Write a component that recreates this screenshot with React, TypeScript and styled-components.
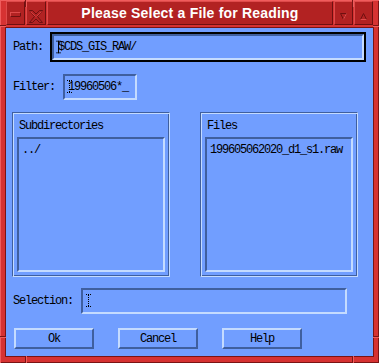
import React from "react";
import styled, { createGlobalStyle, css } from "styled-components";

const C = {
  blue: "#719eff",
  dark: "#3f5f9f",
  light: "#c4dbff",
  red: "#d63232",
  redLight: "#f05c5c",
  redDark: "#7a1414",
  title: "#b22222",
  titleLight: "#de4a4a",
  titleDark: "#6e1010",
};

const Global = createGlobalStyle`
  html, body { margin: 0; padding: 0; background: ${C.blue}; }
  body { width: 379px; height: 363px; overflow: hidden; }
`;

const mono = css`
  font-family: "Liberation Mono", "DejaVu Sans Mono", monospace;
  font-size: 12px;
  letter-spacing: -1.2px;
  color: #000;
`;

const sunken = css`
  border: 2px solid;
  border-color: ${C.dark} ${C.light} ${C.light} ${C.dark};
`;

const raised = css`
  border: 2px solid;
  border-color: ${C.light} ${C.dark} ${C.dark} ${C.light};
`;

const Window = styled.div`
  position: relative;
  box-sizing: border-box;
  width: 379px;
  height: 363px;
  padding: 1px 6px 7px 6px;
  background: ${C.red};
  box-shadow: inset 1px 1px 0 ${C.redLight}, inset -1px -1px 0 ${C.redDark};
  display: flex;
  flex-direction: column;
`;

const Notch = styled.span<{ $v?: boolean }>`
  position: absolute;
  ${(p) =>
    p.$v
      ? css`width: 6px; height: 2px; border-top: 1px solid ${C.redDark}; background: ${C.redLight};`
      : css`width: 2px; height: 7px; border-left: 1px solid ${C.redDark}; background: ${C.redLight};`}
  box-sizing: border-box;
`;

const TitleBar = styled.div`
  display: flex;
  gap: 1px;
  height: 24px;
  margin-bottom: 3px;
`;

const TitleSeg = styled.div<{ $w?: number }>`
  box-sizing: border-box;
  ${(p) => (p.$w ? `width: ${p.$w}px; flex: none;` : "flex: 1;")}
  height: 24px;
  background: ${C.title};
  border: 1px solid;
  border-color: ${C.titleLight} ${C.titleDark} ${C.titleDark} ${C.titleLight};
  display: flex;
  align-items: center;
  justify-content: center;
`;

const TitleText = styled.span`
  font-family: "Liberation Sans", Arial, sans-serif;
  font-weight: bold;
  font-size: 14px;
  color: #fff;
  letter-spacing: 0.2px;
  white-space: nowrap;
`;

const Content = styled.div`
  flex: 1;
  background: ${C.blue};
  box-shadow: 0 0 0 1px ${C.redDark};
  display: flex;
  flex-direction: column;
`;

const Row = styled.div<{ $top: number; $h: number; $left?: number }>`
  display: flex;
  align-items: center;
  margin-top: ${(p) => p.$top}px;
  height: ${(p) => p.$h}px;
  padding-left: ${(p) => p.$left ?? 7}px;
`;

const Label = styled.span<{ $w: number }>`
  ${mono};
  width: ${(p) => p.$w}px;
  flex: none;
  white-space: nowrap;
`;

const Field = styled.div<{ $w: number; $h: number; $focus?: boolean }>`
  position: relative;
  box-sizing: border-box;
  width: ${(p) => p.$w}px;
  height: ${(p) => p.$h}px;
  ${(p) => (p.$focus ? "border: 2px solid #000;" : "")}
  flex: none;
  display: flex;
`;

const FieldInner = styled.div<{ $pad: number }>`
  ${sunken};
  flex: 1;
  display: flex;
  align-items: center;
  padding-left: ${(p) => p.$pad}px;
  ${mono};
  white-space: nowrap;
  overflow: hidden;
`;

const Cursor = styled.svg<{ $x: number }>`
  position: absolute;
  left: ${(p) => p.$x}px;
  top: 50%;
  transform: translateY(-50%);
`;

const Groups = styled.div`
  display: flex;
  gap: 30px;
  margin-top: 12px;
  height: 165px;
  padding-left: 6px;
`;

const Group = styled.div`
  box-sizing: border-box;
  width: 158px;
  height: 165px;
  border: 1px solid;
  border-color: ${C.dark} ${C.light} ${C.light} ${C.dark};
  box-shadow: inset 1px 1px 0 ${C.light}, inset -1px -1px 0 ${C.dark};
  display: flex;
  flex-direction: column;
  padding: 0 4px 4px 4px;
`;

const GroupLabel = styled.div`
  ${mono};
  height: 24px;
  padding-left: 2px;
  padding-top: 1px;
  box-sizing: border-box;
  display: flex;
  align-items: center;
`;

const List = styled.div`
  ${sunken};
  flex: 1;
  padding: 5px 3px;
`;

const Item = styled.div`
  ${mono};
  line-height: 13px;
  white-space: nowrap;
`;

const Buttons = styled.div`
  display: flex;
  gap: 24px;
  margin-top: 14px;
  padding-left: 8px;
`;

const Button = styled.div`
  ${raised};
  box-sizing: border-box;
  width: 80px;
  height: 21px;
  display: flex;
  align-items: center;
  justify-content: center;
  ${mono};
`;

const IBeam = ({ x, dotted }: { x: number; dotted?: boolean }) =>
  dotted ? (
    <Cursor $x={x} width="5" height="14" viewBox="0 0 5 14">
      {[0, 12].map((y) => (
        <g key={y}>
          <rect x="0" y={y} width="1" height="1" fill="#000" />
          <rect x="2" y={y} width="1" height="1" fill="#000" />
          <rect x="4" y={y} width="1" height="1" fill="#000" />
        </g>
      ))}
      {[1, 3, 5, 7, 9, 11].map((y) => (
        <rect key={"m" + y} x="2" y={y} width="1" height="1" fill="#000" />
      ))}
    </Cursor>
  ) : (
    <Cursor $x={x} width="5" height="13" viewBox="0 0 5 13">
      <rect x="0" y="0" width="5" height="1" fill="#000" />
      <rect x="0" y="12" width="5" height="1" fill="#000" />
      <rect x="2" y="0" width="1" height="13" fill="#000" />
    </Cursor>
  );

export default function App() {
  return (
    <>
      <Global />
      <Window>
        <Notch style={{ left: 25, top: 0 }} />
        <Notch style={{ left: 352, top: 0 }} />
        <Notch style={{ left: 25, bottom: 0 }} />
        <Notch style={{ left: 352, bottom: 0 }} />
        <Notch $v style={{ left: 0, top: 25 }} />
        <Notch $v style={{ right: 0, top: 25 }} />
        <Notch $v style={{ left: 0, top: 336 }} />
        <Notch $v style={{ right: 0, top: 336 }} />
        <TitleBar>
          <TitleSeg $w={19}>
            <svg width="17" height="22" viewBox="0 0 17 22">
              <rect x="3.5" y="10.5" width="10" height="4" fill={C.title} stroke={C.titleLight} />
              <path d="M3.5 14.5 H13.5 V10.5" fill="none" stroke={C.titleDark} />
            </svg>
          </TitleSeg>
          <TitleSeg $w={20}>
            <svg width="18" height="22" viewBox="0 0 18 22">
              <path
                d="M2.5 8.5 L5.5 8.5 L9 12 L12.5 8.5 L15.5 8.5 L10.5 14.5 L15.5 20.5 L12.5 20.5 L9 17 L5.5 20.5 L2.5 20.5 L7.5 14.5 Z"
                fill={C.title}
                stroke={C.titleDark}
              />
              <path d="M3.5 9.5 L8.5 14.5 M14.5 9.5 L9.5 14.5" stroke={C.titleLight} strokeWidth="0.8" />
            </svg>
          </TitleSeg>
          <TitleSeg>
            <TitleText>Please Select a File for Reading</TitleText>
          </TitleSeg>
          <TitleSeg $w={19}>
            <svg width="17" height="22" viewBox="0 0 17 22">
              <path d="M5.5 11.5 H11.5 L8.5 17.5 Z" fill="none" stroke={C.titleDark} />
              <path d="M8.5 17.5 L11.5 11.5" stroke={C.titleLight} />
            </svg>
          </TitleSeg>
          <TitleSeg $w={19}>
            <svg width="17" height="22" viewBox="0 0 17 22">
              <path d="M8.5 11.5 L11.5 17.5 H5.5 Z" fill="none" stroke={C.titleDark} />
              <path d="M5.5 17.5 H11.5" stroke={C.titleLight} />
            </svg>
          </TitleSeg>
        </TitleBar>
        <Content>
          <Row $top={4} $h={30}>
            <Label $w={37}>Path:</Label>
            <Field $w={316} $h={30} $focus>
              <FieldInner $pad={4}>$CDS_GIS_RAW/</FieldInner>
              <IBeam x={4} />
            </Field>
          </Row>
          <Row $top={12} $h={26}>
            <Label $w={50}>Filter:</Label>
            <Field $w={74} $h={26}>
              <FieldInner $pad={3}>19960506*_</FieldInner>
              <IBeam x={4} dotted />
            </Field>
          </Row>
          <Groups>
            <Group>
              <GroupLabel>Subdirectories</GroupLabel>
              <List>
                <Item>../</Item>
              </List>
            </Group>
            <Group>
              <GroupLabel>Files</GroupLabel>
              <List>
                <Item>199605062020_d1_s1.raw</Item>
              </List>
            </Group>
          </Groups>
          <Row $top={11} $h={26}>
            <Label $w={68}>Selection:</Label>
            <Field $w={266} $h={26}>
              <FieldInner $pad={3}></FieldInner>
              <IBeam x={5} dotted />
            </Field>
          </Row>
          <Buttons>
            <Button>Ok</Button>
            <Button>Cancel</Button>
            <Button>Help</Button>
          </Buttons>
        </Content>
      </Window>
    </>
  );
}
